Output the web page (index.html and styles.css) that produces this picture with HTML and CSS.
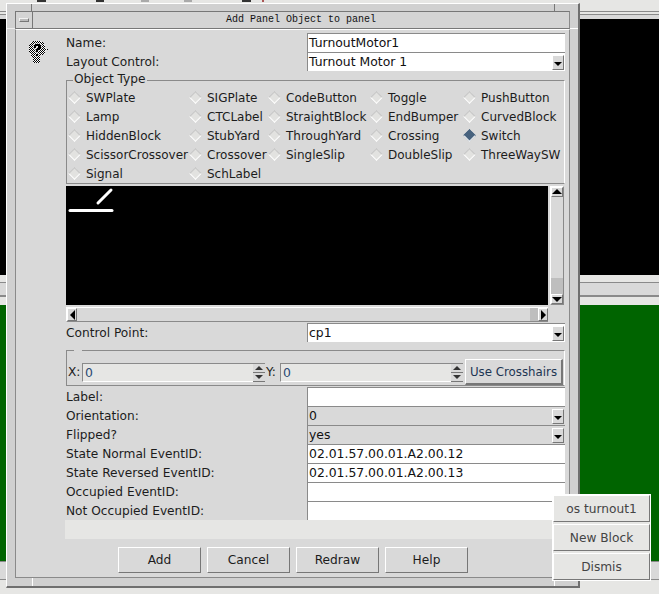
FILE: index.html
```html
<!DOCTYPE html>
<html lang="en">
    <head>
        <meta charset="utf-8" />
        <title>Add Panel Object to panel</title>
        <link rel="stylesheet" href="styles.css">
    </head>
    <body>
        <div class="win win-top">
            <div class="win-strip"></div>
            <div class="win-black"></div>
        </div>
        <div class="win win-bottom">
            <div class="win-light"></div>
            <div class="win-bar"></div>
            <div class="win-light short"></div>
            <div class="win-green"></div>
            <div class="win-foot"></div>
        </div>

        <div class="dialog">
            <div class="titlebar">
                <div class="menu-btn"><span></span></div>
                <div class="title">Add Panel Object to panel</div>
            </div>
            <div class="client">
                <div class="main">
                    <svg class="icon" width="22" height="24" viewBox="0 0 22 24">
                        <defs>
                            <pattern id="dither" width="2" height="2" patternUnits="userSpaceOnUse">
                                <rect width="2" height="2" fill="#fff" />
                                <rect width="1" height="1" fill="#000" />
                                <rect x="1" y="1" width="1" height="1" fill="#000" />
                            </pattern>
                        </defs>
                        <path d="M5 1H13V2H15V3H16V5H17V8H18V9H20V10H18V11H17V14H15V15H12V23H5V17H3V14H2V12H1V5H2V3H3V2H5Z" fill="url(#dither)" />
                        <path d="M6 5H7V4H12V5H13V9H12V10H10V12H8V9H9V8H10V6H8V8H6Z" fill="#000" stroke="#fff" stroke-width="1" paint-order="stroke" />
                        <path d="M8 14H10V16H8Z" fill="#000" stroke="#fff" stroke-width="1" paint-order="stroke" />
                    </svg>
                    <div class="form">
                        <div class="row"><label>Name:</label><div class="entry">TurnoutMotor1</div></div>
                        <div class="row">
                            <label>Layout Control:</label>
                            <div class="entry combo">Turnout Motor 1<span class="drop"></span></div>
                        </div>

                        <div class="types">
                            <span class="legend">Object Type</span>
                            <div class="types-grid">
                                <div class="radio">SWPlate</div>
                                <div class="radio">SIGPlate</div>
                                <div class="radio">CodeButton</div>
                                <div class="radio">Toggle</div>
                                <div class="radio">PushButton</div>
                                <div class="radio">Lamp</div>
                                <div class="radio">CTCLabel</div>
                                <div class="radio">StraightBlock</div>
                                <div class="radio">EndBumper</div>
                                <div class="radio">CurvedBlock</div>
                                <div class="radio">HiddenBlock</div>
                                <div class="radio">StubYard</div>
                                <div class="radio">ThroughYard</div>
                                <div class="radio">Crossing</div>
                                <div class="radio on">Switch</div>
                                <div class="radio">ScissorCrossover</div>
                                <div class="radio">Crossover</div>
                                <div class="radio">SingleSlip</div>
                                <div class="radio">DoubleSlip</div>
                                <div class="radio">ThreeWaySW</div>
                                <div class="radio">Signal</div>
                                <div class="radio">SchLabel</div>
                            </div>
                        </div>

                        <div class="preview">
                            <div class="canvas">
                                <svg width="60" height="40" viewBox="0 0 60 40">
                                    <path d="M4 24.5H46" stroke="#fff" stroke-width="3" stroke-linecap="round" />
                                    <path d="M32 17L45 4" stroke="#fff" stroke-width="3" stroke-linecap="round" />
                                </svg>
                            </div>
                            <div class="vscroll">
                                <span class="arrow up"></span>
                                <span class="trough"></span>
                                <span class="thumb"></span>
                                <span class="arrow down"></span>
                            </div>
                            <div class="hscroll">
                                <span class="arrow left"></span>
                                <span class="trough"></span>
                                <span class="thumb"></span>
                                <span class="arrow right"></span>
                            </div>
                        </div>

                        <div class="row">
                            <label>Control Point:</label>
                            <div class="entry combo">cp1<span class="drop"></span></div>
                        </div>

                        <div class="coords">
                            <label>X:</label>
                            <div class="spin">0<span class="spin-btns"><i class="s-up"></i><i class="s-down"></i></span></div>
                            <label>Y:</label>
                            <div class="spin">0<span class="spin-btns"><i class="s-up"></i><i class="s-down"></i></span></div>
                            <div class="btn crosshairs">Use Crosshairs</div>
                        </div>

                        <div class="row"><label>Label:</label><div class="entry"></div></div>
                        <div class="row">
                            <label>Orientation:</label>
                            <div class="entry combo gray">0<span class="drop"></span></div>
                        </div>
                        <div class="row">
                            <label>Flipped?</label>
                            <div class="entry combo gray">yes<span class="drop"></span></div>
                        </div>
                        <div class="row"><label>State Normal EventID:</label><div class="entry">02.01.57.00.01.A2.00.12</div></div>
                        <div class="row"><label>State Reversed EventID:</label><div class="entry">02.01.57.00.01.A2.00.13</div></div>
                        <div class="row"><label>Occupied EventID:</label><div class="entry"></div></div>
                        <div class="row"><label>Not Occupied EventID:</label><div class="entry"></div></div>
                        <div class="message"></div>
                    </div>
                </div>
                <div class="buttons">
                    <div class="btn">Add</div>
                    <div class="btn">Cancel</div>
                    <div class="btn">Redraw</div>
                    <div class="btn">Help</div>
                </div>
            </div>
        </div>

        <div class="popup">
            <div class="btn">os turnout1</div>
            <div class="btn">New Block</div>
            <div class="btn">Dismis</div>
        </div>
    </body>
</html>
```

FILE: styles.css
```css
html, body {
    margin: 0;
    padding: 0;
}
body {
    position: relative;
    width: 659px;
    height: 594px;
    overflow: hidden;
    background-color: #e6e6e4;
    color: #1c1c1c;
    font: 12px "DejaVu Sans", sans-serif;
}
label {
    display: block;
    font-size: 12.2px;
}

/* windows behind the dialog */
.win {
    position: absolute;
    left: 0;
    width: 659px;
}
.win-top {
    top: 0;
}
.win-strip {
    height: 19px;
    background:
        linear-gradient(#333, #333) 37px 0 / 9px 2px no-repeat,
        linear-gradient(#333, #333) 96px 0 / 8px 2px no-repeat,
        linear-gradient(#aaa, #aaa) 141px 0 / 8px 2px no-repeat,
        linear-gradient(#aaa, #aaa) 184px 0 / 8px 2px no-repeat,
        linear-gradient(#333, #333) 242px 0 / 9px 2px no-repeat,
        linear-gradient(#a55, #a55) 262px 0 / 2px 2px no-repeat,
        linear-gradient(to bottom, #e6e6e4 11px, #8a8a8a 11px, #8a8a8a 12px, #e6e6e4 12px, #e6e6e4 14px, #8a8a8a 14px, #8a8a8a 15px, #d9d9d9 15px);
}
.win-black {
    height: 256px;
    background-color: #000;
}
.win-bottom {
    top: 275px;
}
.win-light {
    height: 7px;
    background-color: #e6e6e4;
}
.win-light.short {
    height: 8px;
}
.win-bar {
    height: 15px;
    box-sizing: border-box;
    background-color: #d9d9d9;
    border-top: 1px solid #8a8a8a;
    border-bottom: 2px solid #8a8a8a;
}
.win-green {
    height: 256px;
    background-color: #006400;
}
.win-foot {
    height: 17px;
    background-color: #d9d9d9;
    border-top: 1px solid #8a8a8a;
    border-bottom: 1px solid #8a8a8a;
}

/* dialog with its window manager frame */
.dialog {
    position: absolute;
    left: 6px;
    top: 3px;
    width: 574px;
    height: 585px;
    box-sizing: border-box;
    padding: 7px 8px 8px 8px;
    background:
        linear-gradient(#777, #777) 24px 0 / 1px 8px no-repeat,
        linear-gradient(#777, #777) 547px 0 / 1px 8px no-repeat,
        linear-gradient(#fff, #fff) 25px bottom / 1px 9px no-repeat,
        linear-gradient(#fff, #fff) 547px bottom / 1px 9px no-repeat,
        linear-gradient(#eee, #eee) 0 24px / 8px 1px no-repeat,
        linear-gradient(#fff, #fff) right 24px / 8px 1px no-repeat,
        #d0d0d0;
    border-top: 1px solid #fff;
    border-left: 1px solid #fff;
    border-bottom: 2px solid #6f6f6f;
    border-right: 2px solid #6f6f6f;
}
.titlebar {
    display: flex;
    height: 18px;
    box-sizing: border-box;
    border: 1px solid #777;
    border-right-color: #8a8a8a;
    background-color: #d4d4d4;
}
.menu-btn {
    display: flex;
    align-items: center;
    justify-content: center;
    width: 16px;
    border-right: 1px solid #777;
}
.menu-btn span {
    display: block;
    width: 8px;
    height: 2px;
    background-color: #bbb;
    border: 1px solid #f2f2f2;
    border-right-color: #777;
    border-bottom-color: #777;
}
.title {
    flex: 1;
    text-align: center;
    font: 10px/16px "Liberation Mono", monospace;
    color: #111;
}
.client {
    display: flex;
    flex-direction: column;
    height: 549px;
    box-sizing: border-box;
    background-color: #d9d9d9;
    border: 1px solid #8a8a8a;
    border-top-color: #fff;
}
.main {
    display: flex;
    padding-top: 3px;
}
.icon {
    flex: none;
    width: 22px;
    height: 24px;
    margin: 7px 16px 0 12px;
}
.form {
    width: 499px;
}

/* rows */
.row {
    display: grid;
    grid-template-columns: 241px 258px;
    height: 19px;
    align-items: center;
}
.entry {
    position: relative;
    height: 19px;
    box-sizing: border-box;
    padding-left: 1px;
    background-color: #fff;
    border-top: 1px solid #8a8a8a;
    border-left: 1px solid #8a8a8a;
    font-size: 12.4px;
    line-height: 18px;
    color: #111;
}
.entry.gray {
    background-color: #d9d9d9;
}
.drop {
    position: absolute;
    right: 1px;
    top: 2px;
    width: 12px;
    height: 15px;
    box-sizing: border-box;
    background-color: #d9d9d9;
    border: 1px solid #fff;
    border-right-color: #777;
    border-bottom-color: #777;
}
.drop::after {
    content: "";
    position: absolute;
    left: 1px;
    top: 6px;
    border-left: 4px solid transparent;
    border-right: 4px solid transparent;
    border-top: 4px solid #000;
}

/* object type group */
.types {
    position: relative;
    height: 104px;
    box-sizing: border-box;
    margin-top: 9px;
    padding: 7px 0 0 2px;
    border: 1px solid #8a8a8a;
    border-right-color: #fff;
}
.legend {
    position: absolute;
    left: 6px;
    top: -9px;
    padding: 0 1px;
    font-size: 12.2px;
    line-height: 15px;
    background-color: #d9d9d9;
}
.types-grid {
    display: grid;
    grid-template-columns: 121px 79px 102px 93px 100px;
    grid-auto-rows: 19px;
    align-items: center;
}
.radio {
    display: flex;
    align-items: center;
    gap: 7px;
    white-space: nowrap;
}
.radio::before {
    content: "";
    flex: none;
    width: 9px;
    height: 9px;
    margin-left: 1px;
    box-sizing: border-box;
    transform: rotate(45deg);
    background-color: #e2e2e0;
    border: 1px solid #fff;
    border-top-color: #c4c4c4;
    border-left-color: #c4c4c4;
}
.radio.on::before {
    background-color: #47627e;
    border-color: #47627e;
    border-bottom-color: #fff;
    border-right-color: #fff;
}

/* preview canvas and scrollbars */
.preview {
    display: grid;
    grid-template-columns: 482px 14px;
    grid-template-rows: 119px 15px;
    gap: 2px;
    margin: 2px 0 1px;
}
.canvas {
    background-color: #000;
}
.canvas svg {
    display: block;
}
.vscroll, .hscroll {
    display: flex;
    box-sizing: border-box;
}
.vscroll {
    flex-direction: column;
    grid-row: 1;
    grid-column: 2;
    border: 1px solid #fff;
    border-right-color: #8a8a8a;
    border-bottom-color: #8a8a8a;
}
.hscroll {
    grid-row: 2;
    grid-column: 1;
    border-top: 1px solid #fff;
    border-left: 1px solid #fff;
    border-bottom: 1px solid #8a8a8a;
}
.trough {
    flex: 1;
}
.thumb {
    flex: none;
    background-color: #bebebe;
}
.vscroll .thumb {
    height: 16px;
}
.hscroll .thumb {
    width: 8px;
}
.arrow {
    position: relative;
    flex: none;
    box-sizing: border-box;
    border: 1px solid #fff;
    border-right-color: #777;
    border-bottom-color: #777;
}
.vscroll .arrow {
    height: 10px;
}
.hscroll .arrow {
    width: 10px;
}
.arrow::after {
    content: "";
    position: absolute;
}
.arrow.up::after, .arrow.down::after {
    left: 0;
    border-left: 5px solid transparent;
    border-right: 5px solid transparent;
}
.arrow.up::after {
    top: 1px;
    border-bottom: 5px solid #000;
}
.arrow.down::after {
    top: 2px;
    border-top: 5px solid #000;
}
.arrow.left::after, .arrow.right::after {
    top: 1px;
    border-top: 5px solid transparent;
    border-bottom: 5px solid transparent;
}
.arrow.left::after {
    left: 2px;
    border-right: 5px solid #000;
}
.arrow.right::after {
    left: 2px;
    border-left: 5px solid #000;
}

/* X / Y group */
.coords {
    position: relative;
    display: flex;
    align-items: center;
    height: 36px;
    box-sizing: border-box;
    margin: 8px 0 1px;
    padding: 8px 0 0 1px;
    border: 1px solid #8a8a8a;
    border-right-color: #fff;
}
.coords::before {
    content: "";
    position: absolute;
    left: 7px;
    top: -1px;
    width: 8px;
    height: 1px;
    background-color: #d9d9d9;
}
.coords label {
    width: 14px;
}
.spin {
    position: relative;
    width: 183px;
    height: 19px;
    margin-right: 1px;
    box-sizing: border-box;
    padding-left: 2px;
    font-size: 12.4px;
    line-height: 18px;
    color: #2b4a73;
    background-color: #e6e6e4;
    border-top: 1px solid #8a8a8a;
    border-left: 1px solid #8a8a8a;
    border-bottom: 1px solid #fff;
}
.spin-btns {
    position: absolute;
    right: 0;
    top: 0;
    display: flex;
    flex-direction: column;
    width: 12px;
}
.spin-btns i {
    display: block;
    position: relative;
    height: 8px;
    border-bottom: 1px solid #777;
    background-color: #d9d9d9;
}
.spin-btns i::after {
    content: "";
    position: absolute;
    left: 2px;
    top: 2px;
    border-left: 4px solid transparent;
    border-right: 4px solid transparent;
}
.s-up::after {
    border-bottom: 4px solid #333;
}
.s-down::after {
    border-top: 4px solid #333;
}
.btn {
    display: flex;
    align-items: center;
    justify-content: center;
    box-sizing: border-box;
    border: 1px solid #fff;
    border-right-color: #777;
    border-bottom-color: #777;
    background-color: #d9d9d9;
    white-space: nowrap;
    font-size: 12.2px;
}
.crosshairs {
    width: 98px;
    height: 26px;
    margin-left: 1px;
    color: #1c3552;
    font-size: 11.8px;
    border-right-width: 2px;
    border-bottom-width: 2px;
}

/* bottom of the dialog */
.message {
    height: 19px;
    margin-left: -1px;
    background-color: #e6e6e4;
}
.buttons {
    display: flex;
    gap: 6px;
    padding: 8px 0 0 102px;
}
.buttons .btn {
    width: 83px;
    height: 26px;
}

/* popup over the dialog */
.popup {
    position: absolute;
    left: 552px;
    top: 494px;
    display: flex;
    flex-direction: column;
    gap: 2px;
    width: 99px;
    box-sizing: border-box;
    background-color: #e6e6e4;
    border: 1px solid #fff;
}
.popup .btn {
    height: 27px;
    color: #444;
    background-color: #e6e6e4;
}
```
